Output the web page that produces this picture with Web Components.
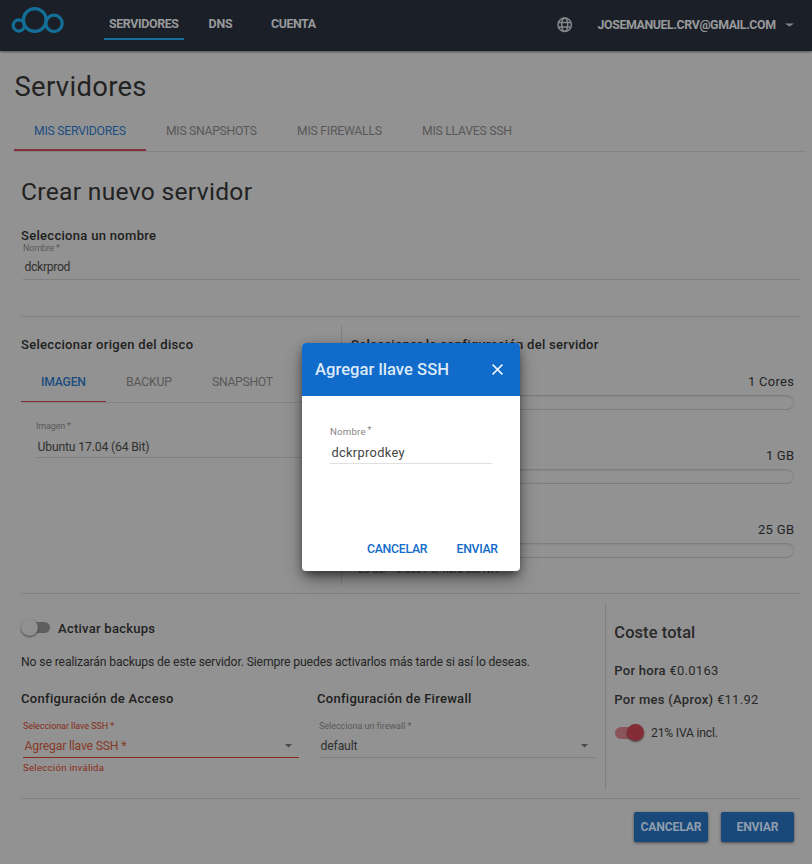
<!DOCTYPE html>
<html lang="es"><head><meta charset="utf-8"><title>Servidores</title>
<style>html,body{margin:0;height:864px;overflow:hidden;background:#929292}</style></head><body>
<server-page></server-page>
<script>
const define=(name,html,setup)=>customElements.define(name,class extends HTMLElement{
  connectedCallback(){
    if(this.shadowRoot)return;
    const t=document.createElement('template');t.innerHTML=html;
    this.attachShadow({mode:'open'}).append(t.content.cloneNode(true));
    if(setup)setup(this,this.shadowRoot);
  }
});

/* Single-line text whose tracking is set so the line spans "fit" pixels. */
define('ui-text','<style>:host{display:block;white-space:nowrap}span{display:inline-block}</style><span><slot></slot></span>',(el,r)=>{
  const fit=+el.getAttribute('fit');if(!fit)return;
  const s=r.querySelector('span'),n=el.textContent.length;
  s.style.letterSpacing='0px';
  const w=s.getBoundingClientRect().width;
  s.style.letterSpacing=((fit-w)/(n-1)).toFixed(3)+'px';
  s.style.marginRight=(-(fit-w)/(n-1)).toFixed(3)+'px';
});

define('brand-logo',`<style>:host{display:block;width:56px;height:30px}svg{display:block}</style>
<svg width="56" height="30" viewBox="10 5 56 30" fill="none" stroke="#136f98" stroke-width="3.2"><circle cx="18.8" cy="25.5" r="5.6"/><circle cx="34.8" cy="20" r="11.4"/><circle cx="54" cy="23.4" r="8.2"/></svg>`);

define('app-header',`<style>
:host{display:flex;height:51px;box-sizing:border-box;background:#1b2028;color:#999a9c;font-size:12.4px;font-weight:700;padding-left:10px;border-bottom:0;box-shadow:0 1px 2px rgba(0,0,0,.45)}
brand-logo{margin:5px 38px 0 0}
nav{display:flex;gap:14px}
.n{box-sizing:border-box;height:40px;padding:8px 5px 0;line-height:32px;border-bottom:2px solid transparent}
.n.on{border-color:#136f98}
.user{display:flex;margin-left:auto;padding:9px 18px 0 0;line-height:32px;height:32px;align-items:center}
svg{display:block}.g{margin-right:25px}.c{margin-left:9px}
</style><brand-logo></brand-logo>
<nav><div class="n on"><ui-text fit="70">SERVIDORES</ui-text></div><div class="n" style="margin-left:5.6px"><ui-text fit="24">DNS</ui-text></div><div class="n" style="margin-left:14.4px"><ui-text fit="45">CUENTA</ui-text></div></nav>
<div class="user"><svg class="g" width="16" height="16" viewBox="0 0 16 16" fill="none" stroke="#85888b" stroke-width="1.5"><circle cx="7.7" cy="7.7" r="6.7"/><ellipse cx="7.7" cy="7.7" rx="3" ry="6.7"/><path d="M1.5 5.4h12.4M1.5 10.1h12.4"/></svg><ui-text fit="178.5">JOSEMANUEL.CRV@GMAIL.COM</ui-text><svg class="c" width="9" height="4" viewBox="0 0 9 4"><path d="M0 .4h9L4.5 3.4z" fill="#85888b"/></svg></div>`);

define('ui-tabs',`<style>:host{display:flex;box-sizing:border-box;border-bottom:1px solid #838383;font-size:12.2px;color:#585858}</style><slot></slot>`);
define('ui-tab',`<style>:host{display:block;box-sizing:border-box;padding:0 20px;color:#585858}
:host([on]){color:#1c4d80;border-bottom:var(--bar,2px) solid #842f38;font-weight:var(--w,500)}</style><slot></slot>`);

define('ui-field',`<style>
:host{display:block;box-sizing:border-box;position:relative;height:39px;border-bottom:1px solid var(--line,#7f7f7f);color:var(--c,#303030)}
.l{font-size:9px;line-height:14px;height:14px;color:var(--lc,#595959)}
.v{display:flex;align-items:center;height:20px;line-height:20px;font-size:12.2px;padding:0 7px 0 1.5px;margin-top:var(--gap,2px);justify-content:space-between}
svg{display:none}:host([select]) svg{display:block}
</style><div class="l"><slot name="label"></slot></div><div class="v"><slot></slot><svg width="7" height="4" viewBox="0 0 7 4"><path d="M0 0h7L3.5 3.6z" fill="#484848"/></svg></div>`);

define('ui-switch',`<style>
:host{display:block;width:29px;height:20px;position:relative;flex:none}
i{display:block;box-sizing:border-box;margin:4px 0 0 2px;width:27px;height:11px;border-radius:6px;background:#5f5f5f}
b{position:absolute;left:0;top:1px;width:17px;height:17px;border-radius:50%;background:#909090;box-shadow:0 1px 2px rgba(0,0,0,.55)}
:host([on]) i{background:#8a5459;margin-left:0;height:12px}
:host([on]) b{left:12px;background:#842c35}
</style><i></i><b></b>`);

define('ui-slider',`<style>
:host{display:block;height:74px;color:#242424;font-size:13px}
.t{display:flex;justify-content:flex-end;height:27px;line-height:27px}
.b{height:15px;box-sizing:border-box;border-radius:8px;border:1px solid #7d7d7d;border-width:1px 0;box-shadow:inset -1px 0 1px -.5px #858585,inset 0 1px 2px rgba(0,0,0,.06)}
.n{font-size:10px;line-height:12px;padding:6px 0 0 7px;color:#444}
</style><div class="t"><slot></slot></div><div class="b"></div><div class="n"><slot name="note"></slot></div>`);

define('ui-button',`<style>:host{display:flex;align-items:center;justify-content:center;height:30px;border-radius:2px;background:#19497b;color:#8f9dad;font-size:12.2px;font-weight:700;box-shadow:0 1px 3px rgba(0,0,0,.5)}</style><slot></slot>`);

define('ssh-dialog',`<style>
:host{position:absolute;left:302px;top:343px;width:218px;height:228px;border-radius:4px;background:#fff;overflow:hidden;display:flex;flex-direction:column;box-shadow:0 7px 9px -4px rgba(0,0,0,.4),0 9px 18px rgba(0,0,0,.3),0 2px 8px rgba(0,0,0,.25)}
header{display:flex;align-items:center;height:53px;box-sizing:border-box;padding:0 17px 1px 13px;background:#116bcb;color:#dceaf8;font-size:16.6px;font-weight:500;justify-content:space-between}
main{flex:1;padding:29px 28px 0}
.l{display:flex;color:#858585;font-size:9.6px;line-height:14px}.l sup{font-size:9px;line-height:11px;margin-left:2px;vertical-align:0}
.v{color:#444;font-size:12.8px;line-height:22px;height:25px;box-sizing:border-box;border-bottom:1px solid #e0e0e0;padding:3px 0 0 1.5px}
footer{display:flex;justify-content:flex-end;gap:29px;padding:0 22px 12px 0;font-size:12.3px;font-weight:500;line-height:20px;color:#116bcb}
</style><header><ui-text fit="134">Agregar llave SSH</ui-text><svg width="11" height="11" viewBox="0 0 11 11" stroke="#e8f1fb" stroke-width="1.7"><path d="M.6.6l9.8 9.8M10.4.6L.6 10.4"/></svg></header>
<main><div class="l"><ui-text fit="35.5">Nombre</ui-text><sup>*</sup></div><div class="v"><ui-text fit="73">dckrprodkey</ui-text></div></main>
<footer><ui-text fit="60.5">CANCELAR</ui-text><ui-text fit="41.5">ENVIAR</ui-text></footer>`);

define('server-page',`<style>
:host{display:block;position:relative;width:812px;height:864px;background:#929292;color:#222;font-family:Roboto,"Liberation Sans",sans-serif;overflow:hidden}
h1,h2,h3{margin:0;font-weight:400}
h1{padding:14px 0 0 14.5px;font-size:27.4px;line-height:44px;height:43px}
h2{font-size:24.6px;line-height:40px;height:40px;font-weight:400}
h3{font-size:13px;line-height:18px;height:18px;font-weight:500;color:#202020}
.top{margin:0 6px 0 14px;height:44px;line-height:46px}
.top ui-tab[on]{--w:400;height:43px}
.body{margin:0 12px 0 21px}
.name{height:164px;padding-top:20px;box-sizing:border-box}
.row{border-top:1px solid #808080;display:flex;box-sizing:border-box}
.disk{height:277px;padding:9px 0 8px}
.src{width:321px;box-sizing:border-box;border-right:1px solid #808080;padding-top:10px}
.src ui-tabs{height:40px;margin-top:9px;line-height:38px}
.src ui-tab{--bar:1px}
.cfg{flex:1;padding:10px 6px 0 9px}
.end{height:205px;padding:9px 0 8px}
.left{width:585px;box-sizing:border-box;border-right:1px solid #808080}
.sw{display:flex;align-items:center;font-size:13px;font-weight:500;height:20px;gap:8px}
.p{font-size:12.2px;line-height:20px;margin-top:14px;color:#262626}
.two{display:flex;gap:20px;margin-top:18px}.two>div{width:276px}
.two h3{margin-bottom:11px}
.two ui-field{margin:0 -2px 0 2px;--gap:3px}
.err{font-size:9.6px;line-height:12px;margin:4px 0 0 2px;color:#8a2b18}
.cost{padding:19px 0 0 9px;color:#292929;font-size:13px}
.cost>ui-text{margin-left:-.7px}
.act{display:flex;justify-content:flex-end;gap:13px;padding:13px 6px 0 0;border-top:1px solid #808080}
</style>
<app-header></app-header>
<h1><ui-text fit="132">Servidores</ui-text></h1>
<ui-tabs class="top"><ui-tab on><ui-text fit="92">MIS SERVIDORES</ui-text></ui-tab><ui-tab><ui-text fit="91">MIS SNAPSHOTS</ui-text></ui-tab><ui-tab><ui-text fit="85">MIS FIREWALLS</ui-text></ui-tab><ui-tab><ui-text fit="90">MIS LLAVES SSH</ui-text></ui-tab></ui-tabs>
<div class="body">
 <section class="name"><h2><ui-text fit="231">Crear nuevo servidor</ui-text></h2><h3 style="margin-top:15px"><ui-text fit="135">Selecciona un nombre</ui-text></h3>
 <ui-field style="margin:-4px 0 0 2px;--gap:2px"><ui-text slot="label" fit="37">Nombre *</ui-text><ui-text fit="46">dckrprod</ui-text></ui-field></section>
 <section class="row disk"><div class="src"><h3><ui-text fit="172">Seleccionar origen del disco</ui-text></h3>
  <ui-tabs><ui-tab on><ui-text fit="45">IMAGEN</ui-text></ui-tab><ui-tab><ui-text fit="46">BACKUP</ui-text></ui-tab><ui-tab><ui-text fit="61">SNAPSHOT</ui-text></ui-tab></ui-tabs>
  <ui-field style="margin:16px 15px 0 15px;--gap:4px"><ui-text slot="label" fit="35">Imagen *</ui-text><ui-text fit="112">Ubuntu 17.04 (64 Bit)</ui-text></ui-field></div>
  <div class="cfg"><h3 style="margin-bottom:14px"><ui-text fit="247">Seleccionar la configuración del servidor</ui-text></h3>
  <ui-slider><ui-text fit="46">1 Cores</ui-text></ui-slider><ui-slider><ui-text fit="28">1 GB</ui-text></ui-slider><ui-slider><ui-text fit="36">25 GB</ui-text><ui-text slot="note" fit="140">25 GB = 0.0001 €/ hora Sin IVA</ui-text></ui-slider></div></section>
 <section class="row end"><div class="left"><div class="sw" style="margin-top:15px"><ui-switch></ui-switch><ui-text fit="97">Activar backups</ui-text></div>
  <div class="p"><ui-text fit="509">No se realizarán backups de este servidor. Siempre puedes activarlos más tarde si así lo deseas.</ui-text></div>
  <div class="two"><div><h3><ui-text fit="152">Configuración de Acceso</ui-text></h3><ui-field select style="--line:#872d19;--c:#873927;--lc:#872d19"><ui-text slot="label" fit="91">Seleccionar llave SSH *</ui-text><ui-text fit="102">Agregar llave SSH *</ui-text></ui-field><div class="err"><ui-text fit="81">Selección inválida</ui-text></div></div>
  <div><h3><ui-text fit="154">Configuración de Firewall</ui-text></h3><ui-field select><ui-text slot="label" fit="92">Selecciona un firewall *</ui-text><ui-text fit="37">default</ui-text></ui-field></div></div></div>
  <div class="cost"><ui-text fit="81" style="font-size:16.4px;font-weight:500;line-height:22px">Coste total</ui-text>
  <ui-text fit="104" style="line-height:20px;margin-top:17px"><span style="font-weight:500">Por hora</span> €0.0163</ui-text>
  <ui-text fit="144" style="line-height:20px;margin-top:9px"><span style="font-weight:500">Por mes (Aprox)</span> €11.92</ui-text>
  <div class="sw" style="font-weight:400;font-size:12.2px;margin-top:13px;gap:7px"><ui-switch on></ui-switch><ui-text fit="67">21% IVA incl.</ui-text></div></div></section>
 <div class="act"><ui-button style="width:74px"><ui-text fit="61">CANCELAR</ui-text></ui-button><ui-button style="width:73px"><ui-text fit="42">ENVIAR</ui-text></ui-button></div>
</div>
<ssh-dialog></ssh-dialog>`);
</script></body></html>
